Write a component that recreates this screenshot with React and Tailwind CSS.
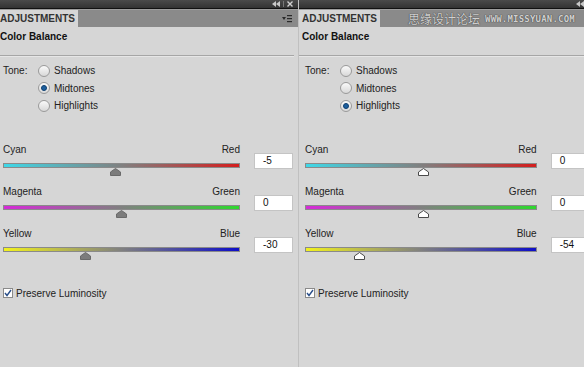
import React from "react";

const font = { fontFamily: '"Liberation Sans", Arial, sans-serif' };

const sliders = [
  { left: "Cyan", right: "Red", from: "#3ed8e8", to: "#d41e1e" },
  { left: "Magenta", right: "Green", from: "#d62ad8", to: "#2ed82e" },
  { left: "Yellow", right: "Blue", from: "#f2f21e", to: "#0e0ec8" },
];

function Collapse() {
  return (
    <svg width="8" height="6" viewBox="0 0 8 6">
      <polygon points="4,0 4,6 0,3" fill="#c8c8c8" />
      <polygon points="8,0 8,6 4,3" fill="#c8c8c8" />
    </svg>
  );
}

function Close() {
  return (
    <svg width="6" height="6" viewBox="0 0 6 6">
      <path d="M0.5 0.5 L5.5 5.5 M5.5 0.5 L0.5 5.5" stroke="#d0d0d0" strokeWidth="1.4" />
    </svg>
  );
}

function MenuIcon() {
  return (
    <svg width="10" height="8" viewBox="0 0 10 8">
      <polygon points="0,2 4,2 2,5" fill="#2a2a2a" />
      <rect x="5" y="0" width="5" height="1.2" fill="#2a2a2a" />
      <rect x="5" y="3" width="5" height="1.2" fill="#2a2a2a" />
      <rect x="5" y="6" width="5" height="1.2" fill="#2a2a2a" />
    </svg>
  );
}

function Radio({ on }) {
  return (
    <div className="w-[12px] h-[12px] rounded-full border border-[#9a9a9a] bg-gradient-to-b from-[#fafafa] to-[#d8d8d8] flex items-center justify-center">
      {on && <div className="w-[6px] h-[6px] rounded-full bg-[#1d5f9e] border border-[#0e3f70]" />}
    </div>
  );
}

function Thumb({ active }) {
  return (
    <svg width="11" height="8" viewBox="0 0 11 8">
      <polygon
        points="5.5,0.5 10.5,4 10.5,7.5 0.5,7.5 0.5,4"
        fill={active ? "#ffffff" : "#7c7c7c"}
        stroke={active ? "#4a4a4a" : "#6a6a6a"}
      />
    </svg>
  );
}

function Slider({ s, value, active }) {
  const pos = ((value + 100) / 200) * 237;
  return (
    <div className="flex h-[42px]">
      <div className="w-[237px]">
        <div className="flex justify-between h-[14px] leading-[14px] text-[10px] text-[#222]">
          <span>{s.left}</span>
          <span>{s.right}</span>
        </div>
        <div
          className="mt-[6px] h-[5px] border border-[#8a8a8a]"
          style={{ background: `linear-gradient(to right, ${s.from}, #808080 50%, ${s.to})` }}
        />
        <div className="relative h-[8px]">
          <div className="absolute top-0" style={{ left: pos - 5.5 }}>
            <Thumb active={active} />
          </div>
        </div>
      </div>
      <div className="ml-[14px] mt-[10px] w-[39px] h-[16px] bg-white border border-[#c4c4c4] text-[10px] leading-[14px] pl-[8px] text-[#111]">
        {value}
      </div>
    </div>
  );
}

function Panel({ values, tone, active, first }) {
  return (
    <div className={`flex flex-col shrink-0 ${first ? "w-[302px] -ml-[3px] border-r border-[#c0c0c0]" : "w-[290px]"}`}>
      <div className="h-[9px] bg-gradient-to-b from-[#4a4a4a] to-[#333] border-b border-[#111] flex items-center justify-end pr-[5px] gap-[3px]">
        <Collapse />
        {first && <div className="w-px h-[6px] bg-[#777]" />}
        {first && <Close />}
      </div>
      <div className="h-[18px] flex bg-[#8a8a8a] border-t border-[#9c9c9c]">
        <div className="w-[81px] bg-[#d6d6d6] text-[10px] font-bold leading-[17px] text-[#333] pl-[3px]">
          ADJUSTMENTS
        </div>
        {first ? (
          <div className="flex-1 flex justify-end items-center pr-[6px]">
            <MenuIcon />
          </div>
        ) : (
          <div className="flex-1 flex items-center pl-[28px] gap-[5px]">
            <span
              className="text-[12px] leading-[16px] text-[#d0d0d0]"
              style={{ fontFamily: '"Noto Sans CJK SC", sans-serif', textShadow: "0 0 1px #444, 0 0 1px #444" }}
            >
              思缘设计论坛
            </span>
            <span
              className="text-[9px] font-bold leading-[16px] text-[#d0d0d0] tracking-[0.2px]"
              style={{ fontFamily: '"DejaVu Sans Mono", monospace', textShadow: "0 0 1px #444, 0 0 1px #444" }}
            >
              WWW.MISSYUAN.COM
            </span>
          </div>
        )}
      </div>
      <div className="mt-[3px] pl-[3px] h-[14px] text-[10px] leading-[14px] font-bold text-[#111]">Color Balance</div>
      <div className="mt-[11px] h-px bg-[#a6a6a6] mr-[4px]" />
      <div className="h-px bg-[#e6e6e6] mr-[4px]" />
      <div className="mt-[5px] pl-[6px] flex">
        <div className="w-[35px] h-[17px] leading-[17px] text-[10px] text-[#222]">Tone:</div>
        <div className="flex flex-col">
          {["Shadows", "Midtones", "Highlights"].map((t, i) => (
            <div key={t} className={`flex items-center gap-[4px] ${i === 1 ? "h-[18px]" : "h-[17px]"}`}>
              <Radio on={tone === i} />
              <span className="text-[10px] text-[#222]">{t}</span>
            </div>
          ))}
        </div>
      </div>
      <div className="mt-[29px] pl-[6px]">
        {sliders.map((s, i) => (
          <Slider key={s.left} s={s} value={values[i]} active={active} />
        ))}
      </div>
      <div className="mt-[17px] pl-[6px] flex items-center h-[14px] gap-[3px]">
        <div className="w-[10px] h-[10px] bg-white border border-[#8a8a8a] flex items-center justify-center">
          <svg width="8" height="8" viewBox="0 0 8 8">
            <path d="M1 4 L3 6.5 L7 1" stroke="#2a4f8a" strokeWidth="1.4" fill="none" />
          </svg>
        </div>
        <span className="text-[10px] text-[#222]">Preserve Luminosity</span>
      </div>
    </div>
  );
}

export default function App() {
  return (
    <div className="w-[584px] h-[367px] overflow-hidden flex bg-[#d6d6d6]" style={font}>
      <Panel first values={[-5, 0, -30]} tone={1} active={false} />
      <Panel values={[0, 0, -54]} tone={2} active />
    </div>
  );
}
